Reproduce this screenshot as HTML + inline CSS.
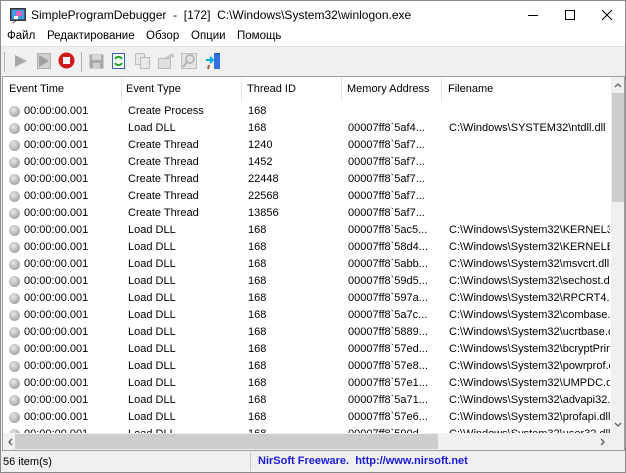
<!DOCTYPE html>
<html><head><meta charset="utf-8"><style>
*{margin:0;padding:0;box-sizing:border-box}
body{width:626px;height:473px;overflow:hidden;background:#f0f0f0;font-family:"Liberation Sans","DejaVu Sans",sans-serif;font-size:11px;color:#000;position:relative}
.abs{position:absolute}
#win{position:absolute;left:0;top:0;width:626px;height:473px;border:1px solid #8a8a8a}
#title{left:1px;top:1px;width:624px;height:28px;background:#fff;font-size:12px}
#menu{left:1px;top:29px;width:624px;height:17px;background:#fff;font-size:11.5px}
#menu span{position:absolute;top:1px}
#tb{left:1px;top:46px;width:624px;height:29px;background:#f0f0f0;border-top:1px solid #e3e3e3}
#list{left:2px;top:76px;width:623px;height:375px;background:#fff;border:1px solid #a0a0a0;overflow:hidden}
.hd{position:absolute;top:12px;font-size:11px}
.sep{position:absolute;top:0;width:1px;height:24px;background:#e5e5e5}
.row{position:absolute;left:0;height:17px;width:607px;white-space:nowrap;overflow:hidden}
.row span{position:absolute;top:2px}
.dot{position:absolute;left:6px;top:3px;width:11px;height:11px;border-radius:50%;background:radial-gradient(circle at 40% 35%,#e8e8e8,#a8a8a8 70%,#8a8a8a);}
#vs{left:608px;top:0;width:14px;height:356px;background:#f0f0f0}
#hs{left:0;top:356px;width:608px;height:17px;background:#f0f0f0}
#status{left:1px;top:451px;width:624px;height:21px;background:#f0f0f0}
</style></head><body>
<div id="win"></div>
<div id="title" class="abs">
 <svg class="abs" style="left:9px;top:7px" width="16" height="16"><rect x="0.5" y="0.5" width="15" height="12" fill="#4a5a8a" stroke="#333"/><rect x="2" y="2" width="12" height="9" fill="#3aa0e0"/><rect x="6" y="3" width="6" height="5" fill="#e060c0"/><rect x="4" y="8" width="4" height="3" fill="#fff"/><path d="M3 15l4-3" stroke="#555"/></svg>
 <span class="abs" style="left:30px;top:7px">SimpleProgramDebugger&nbsp; - &nbsp;[172]&nbsp; C:\Windows\System32\winlogon.exe</span>
 <div class="abs" style="left:527px;top:14px;width:10px;height:1px;background:#000"></div>
 <div class="abs" style="left:564px;top:9px;width:10px;height:10px;border:1px solid #000"></div>
 <svg class="abs" style="left:600px;top:8px" width="12" height="12"><path d="M1 1L11 11M11 1L1 11" stroke="#000" stroke-width="1"/></svg>
</div>
<div id="menu" class="abs">
 <span style="left:6px">Файл</span><span style="left:46px">Редактирование</span><span style="left:145px">Обзор</span><span style="left:190px">Опции</span><span style="left:236px">Помощь</span>
</div>
<div id="tb" class="abs">
 <div class="abs" style="left:3px;top:5px;width:1px;height:20px;background:#b0b0b0"></div>
 <svg class="abs" style="left:13px;top:7px" width="14" height="14"><path d="M1 1L13 7L1 13Z" fill="#a8a8a8"/></svg>
 <svg class="abs" style="left:36px;top:6px" width="14" height="16"><rect x="0.5" y="0.5" width="13" height="15" fill="#d0d0d0" stroke="#b0b0b0"/><path d="M2 2L12 8L2 14Z" fill="#a0a0a0"/></svg>
 <svg class="abs" style="left:57px;top:5px" width="17" height="17"><circle cx="8.5" cy="8.5" r="8" fill="#d01818"/><rect x="5" y="5" width="7" height="7" fill="#fff"/></svg>
 <div class="abs" style="left:80px;top:5px;width:1px;height:20px;background:#b0b0b0"></div>
 <svg class="abs" style="left:88px;top:7px" width="15" height="15"><rect x="0.5" y="0.5" width="14" height="14" fill="#a8a8a8"/><rect x="3" y="1" width="9" height="5" fill="#d8d8d8"/><rect x="4" y="9" width="7" height="5" fill="#d0d0d0"/></svg>
 <svg class="abs" style="left:111px;top:6px" width="13" height="16"><rect x="0.5" y="0.5" width="12" height="15" fill="#fff" stroke="#3060b0"/><path d="M3 6a4 4 0 0 1 7 0M10 10a4 4 0 0 1-7 0" stroke="#20a030" stroke-width="2" fill="none"/></svg>
 <svg class="abs" style="left:134px;top:6px" width="15" height="16"><rect x="0.5" y="0.5" width="9" height="11" fill="#e8e8e8" stroke="#bbb"/><rect x="5.5" y="4.5" width="9" height="11" fill="#e8e8e8" stroke="#bbb"/></svg>
 <svg class="abs" style="left:157px;top:6px" width="17" height="16"><rect x="0.5" y="5.5" width="12" height="10" fill="#e0e0e0" stroke="#bbb"/><path d="M6 6L14 1L16 4" stroke="#bbb" fill="#ccc"/></svg>
 <svg class="abs" style="left:180px;top:6px" width="16" height="16"><rect x="0.5" y="0.5" width="15" height="15" fill="#e4e4e4" stroke="#c0c0c0"/><circle cx="9" cy="6" r="4" fill="none" stroke="#b0b0b0" stroke-width="1.5"/><path d="M6 9L2 14" stroke="#b0b0b0" stroke-width="2"/></svg>
 <svg class="abs" style="left:204px;top:5px" width="16" height="18"><rect x="9" y="1" width="6" height="16" fill="#2050c0"/><path d="M9 1L15 3V17L9 17Z" fill="#3070e0"/><path d="M1 8H8M5 5L8 8L5 11" stroke="#00b0e0" stroke-width="2" fill="none"/><path d="M4 13L3 17" stroke="#a06030" stroke-width="2"/></svg>
</div>
<div id="list" class="abs">
 <span class="hd" style="left:6px;top:6px">Event Time</span>
 <span class="hd" style="left:123px;top:6px">Event Type</span>
 <span class="hd" style="left:244px;top:6px">Thread ID</span>
 <span class="hd" style="left:344px;top:6px">Memory Address</span>
 <span class="hd" style="left:445px;top:6px">Filename</span>
 <div class="sep" style="left:118px"></div><div class="sep" style="left:238px"></div><div class="sep" style="left:338px"></div><div class="sep" style="left:438px"></div>
 <div id="rows"></div>
 <div id="vs" class="abs">
  <svg class="abs" style="left:3px;top:5px" width="8" height="6"><path d="M1 5L4 2L7 5" stroke="#606060" stroke-width="1.3" fill="none"/></svg>
  <div class="abs" style="left:1px;top:16px;width:12px;height:109px;background:#cdcdcd"></div>
  <svg class="abs" style="left:3px;top:345px" width="8" height="6"><path d="M1 1L4 4L7 1" stroke="#606060" stroke-width="1.3" fill="none"/></svg>
 </div>
 <div id="hs" class="abs">
  <svg class="abs" style="left:4px;top:5px" width="6" height="8"><path d="M5 1L2 4L5 7" stroke="#606060" stroke-width="1.3" fill="none"/></svg>
  <div class="abs" style="left:12px;top:1px;width:423px;height:15px;background:#cdcdcd"></div>
  <svg class="abs" style="left:597px;top:5px" width="6" height="8"><path d="M1 1L4 4L1 7" stroke="#606060" stroke-width="1.3" fill="none"/></svg>
 </div>
 <div class="abs" style="left:608px;top:356px;width:14px;height:17px;background:#f0f0f0"></div>
</div>
<div id="status" class="abs">
 <span class="abs" style="left:2px;top:5px">56 item(s)</span>
 <div class="abs" style="left:249px;top:1px;width:1px;height:19px;background:#c8c8c8"></div>
 <span class="abs" style="left:257px;top:4px;font-weight:bold;color:#1a1ae0;font-size:11px">NirSoft Freeware.&nbsp; http://www.nirsoft.net</span>
</div>
<script>
var d=[["Create Process","168","",""],["Load DLL","168","00007ff8`5af4...","C:\\Windows\\SYSTEM32\\ntdll.dll"],["Create Thread","1240","00007ff8`5af7...",""],["Create Thread","1452","00007ff8`5af7...",""],["Create Thread","22448","00007ff8`5af7...",""],["Create Thread","22568","00007ff8`5af7...",""],["Create Thread","13856","00007ff8`5af7...",""],["Load DLL","168","00007ff8`5ac5...","C:\\Windows\\System32\\KERNEL32"],["Load DLL","168","00007ff8`58d4...","C:\\Windows\\System32\\KERNELBA"],["Load DLL","168","00007ff8`5abb...","C:\\Windows\\System32\\msvcrt.dll"],["Load DLL","168","00007ff8`59d5...","C:\\Windows\\System32\\sechost.dl"],["Load DLL","168","00007ff8`597a...","C:\\Windows\\System32\\RPCRT4.d"],["Load DLL","168","00007ff8`5a7c...","C:\\Windows\\System32\\combase.c"],["Load DLL","168","00007ff8`5889...","C:\\Windows\\System32\\ucrtbase.c"],["Load DLL","168","00007ff8`57ed...","C:\\Windows\\System32\\bcryptPrim"],["Load DLL","168","00007ff8`57e8...","C:\\Windows\\System32\\powrprof.c"],["Load DLL","168","00007ff8`57e1...","C:\\Windows\\System32\\UMPDC.dll"],["Load DLL","168","00007ff8`5a71...","C:\\Windows\\System32\\advapi32.c"],["Load DLL","168","00007ff8`57e6...","C:\\Windows\\System32\\profapi.dll"],["Load DLL","168","00007ff8`590d...","C:\\Windows\\System32\\user32.dll"]];
var h="";d.forEach(function(r,i){h+='<div class="row" style="top:'+(26+i*17)+'px"><div class="dot"></div><span style="left:21px">00:00:00.001</span><span style="left:125px">'+r[0]+'</span><span style="left:245px">'+r[1]+'</span><span style="left:345px">'+r[2]+'</span><span style="left:446px">'+r[3]+'</span></div>';});
document.getElementById("rows").innerHTML=h;
</script>
</body></html>
